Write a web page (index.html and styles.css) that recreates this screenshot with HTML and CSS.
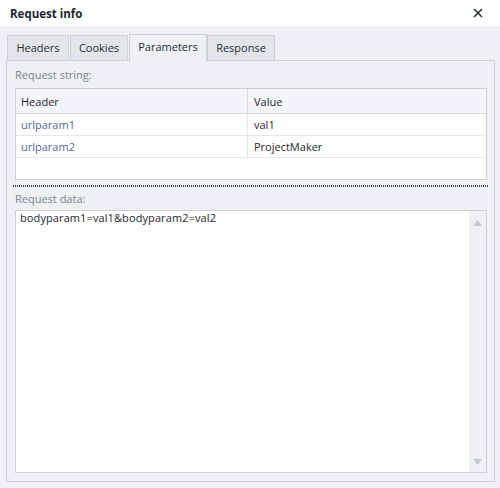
FILE: index.html
```html
<!DOCTYPE html>
<html>
<head>
<meta charset="utf-8">
<link rel="stylesheet" href="styles.css">
</head>
<body>
<div class="window">
  <div class="titlebar">
    <span class="title">Request info</span>
    <svg class="close" width="10" height="10" viewBox="0 0 10 10"><path d="M1 1L9 9M9 1L1 9" stroke="#2b313b" stroke-width="1.6"/></svg>
  </div>
  <div class="content">
    <div class="tabs">
      <div class="tab">Headers</div>
      <div class="tab">Cookies</div>
      <div class="tab active">Parameters</div>
      <div class="tab">Response</div>
    </div>
    <div class="panel">
      <div class="label">Request string:</div>
      <div class="grid">
        <div class="row head"><div class="c1">Header</div><div class="c2">Value</div></div>
        <div class="row"><div class="c1 key">urlparam1</div><div class="c2">val1</div></div>
        <div class="row"><div class="c1 key">urlparam2</div><div class="c2">ProjectMaker</div></div>
      </div>
      <div class="splitter"></div>
      <div class="label">Request data:</div>
      <div class="textarea">
        <div class="text">bodyparam1=val1&amp;bodyparam2=val2</div>
        <div class="scroll">
          <svg width="9" height="6" viewBox="0 0 9 6"><path d="M0 6L4.5 0L9 6Z" fill="#c4c7ce"/></svg>
          <svg width="9" height="6" viewBox="0 0 9 6"><path d="M0 0L4.5 6L9 0Z" fill="#c4c7ce"/></svg>
        </div>
      </div>
    </div>
  </div>
</div>
</body>
</html>
```
FILE: styles.css
```css
html, body { margin: 0; padding: 0; }
body {
  width: 500px; height: 488px; overflow: hidden;
  font-family: "Open Sans", sans-serif;
  font-size: 11px;
  color: #1f2631;
  background: #eff0f4;
}
.window { display: flex; flex-direction: column; height: 488px; }
.titlebar {
  height: 26px; background: #fff;
  display: flex; align-items: center; justify-content: space-between;
  padding: 0 17px 0 10px; box-sizing: border-box;
}
.title { font-weight: bold; font-size: 11.5px; color: #1e2530; }
.close { display: block; }
.content { flex: 1; display: flex; flex-direction: column; padding: 7px 5px 6px 6px; }
.tabs { display: flex; padding-left: 1px; height: 27px; align-items: flex-end; }
.tab {
  height: 25px; box-sizing: border-box;
  border: 1px solid #cdd0d7; border-bottom: none;
  background: #e3e5ea; color: #272d38;
  display: flex; align-items: center; justify-content: center;
  padding: 0 0 1px; margin-right: 1px;
}
.tab:nth-child(1) { width: 62px; }
.tab:nth-child(2) { width: 58px; }
.tab:nth-child(3) { width: 78px; }
.tab:nth-child(4) { width: 68px; }
.tab.active {
  height: 27px; background: #eff0f4; position: relative; top: 1px;
  margin-right: 0; padding-bottom: 3px;
}
.panel {
  flex: 1; border: 1px solid #cdd0d7; box-sizing: border-box;
  display: flex; flex-direction: column;
  padding: 0 7px 8px 8px;
}
.label { color: #7b8391; height: 27px; display: flex; align-items: center; }
.grid {
  height: 92px; box-sizing: border-box;
  border: 1px solid #cdd0d7; background: #fff;
}
.row { display: flex; height: 21px; border-bottom: 1px solid #e6e8ec; }
.row.head { height: 24px; background: #f4f5f8; border-bottom: 1px solid #d6d9df; }
.c1 { width: 226px; padding-left: 5px; border-right: 1px solid #e3e5ea; display: flex; align-items: center; }
.row.head .c1 { border-right-color: #d6d9df; }
.c2 { flex: 1; padding-left: 6px; display: flex; align-items: center; }
.key { color: #55679a; }
.splitter {
  height: 2px; margin: 5px -2px 0 -2px;
  background-image: repeating-linear-gradient(90deg, #3a3f48 0 1px, transparent 1px 2px);
}
.panel .splitter + .label { height: 23px; }
.textarea {
  flex: 1; border: 1px solid #cdd0d7; background: #fff;
  display: flex;
}
.text { flex: 1; padding: 0 4px; line-height: 14px; margin-top: 0; letter-spacing: 0.1px; }
.scroll {
  width: 17px; background: #eff0f4;
  display: flex; flex-direction: column; justify-content: space-between; align-items: center;
  padding: 9px 0 7px;
}
.scroll svg { display: block; }
```
